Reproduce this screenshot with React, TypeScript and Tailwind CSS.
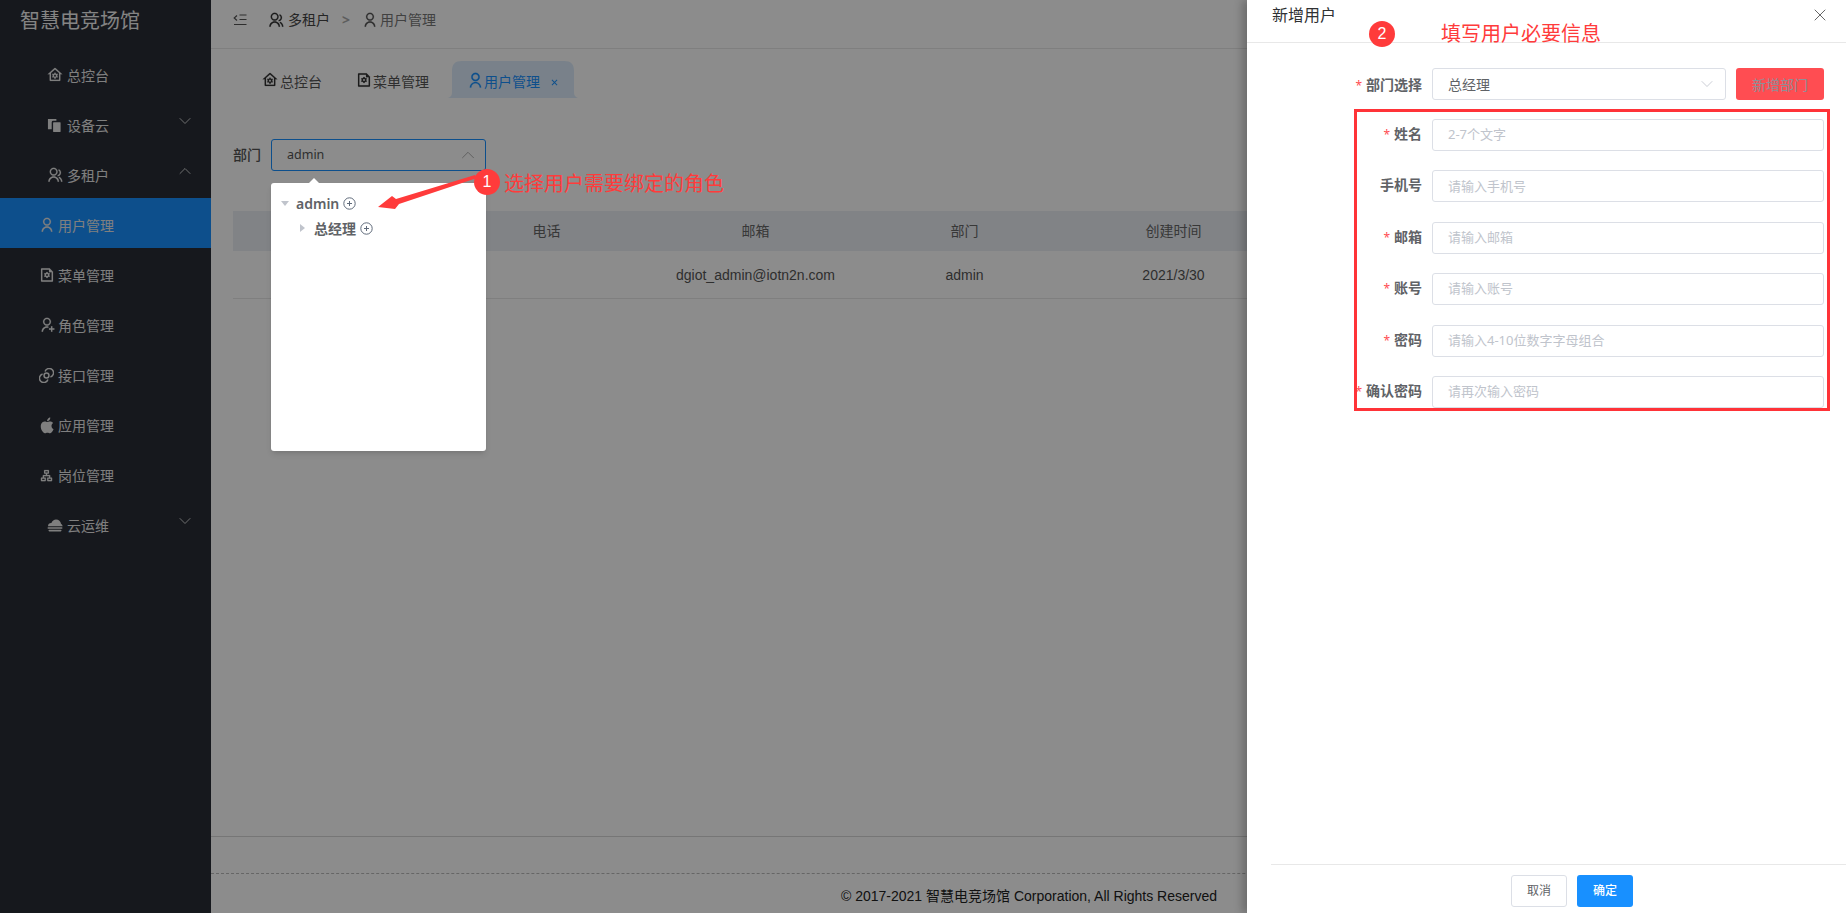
import React from "react";
import {
  RiHomeGearLine,
  RiFileSettingsLine,
  RiUserLine,
  RiGroupLine,
  RiUserAddLine,
  RiAppleFill,
  RiOrganizationChart,
  RiCloseLine,
} from "react-icons/ri";
import { ChevronDown, ChevronUp, X } from "lucide-react";

const CJK = "font-['Noto_Sans','Noto_Sans_CJK_SC',sans-serif]";
const ARIAL = "font-['Liberation_Sans','Noto_Sans_CJK_SC',sans-serif]";

const Devices = ({ size = 15 }: { size?: number }) => (
  <svg width={size} height={size} viewBox="0 0 16 16" fill="currentColor">
    <path d="M1 1h9v2H6.5A1.5 1.5 0 0 0 5 4.5V12H1z" />
    <rect x="6.5" y="4.5" width="8" height="10.5" rx="0.5" />
  </svg>
);
const LinkRings = ({ size = 15 }: { size?: number }) => (
  <svg width={size} height={size} viewBox="0 0 16 16" fill="none" stroke="currentColor" strokeWidth="1.6">
    <path d="M6.5 3.8a4.6 4.6 0 1 1 5.7 5.7" />
    <path d="M9.5 12.2a4.6 4.6 0 1 1-5.7-5.7" />
    <circle cx="8" cy="8" r="2.6" />
  </svg>
);
const CloudBars = ({ size = 16 }: { size?: number }) => (
  <svg width={size} height={size} viewBox="0 0 16 14" fill="currentColor">
    <path d="M1 8.2C1 6 2.8 4.8 4.4 5 5.2 2.8 7 1.6 9 1.6c2.8 0 4.6 2 5 4.2.8.4 1.4 1.2 1.6 2.4z" />
    <rect x="0.5" y="9.2" width="15" height="1.6" rx="0.8" />
    <rect x="1.5" y="11.8" width="13" height="1.6" rx="0.8" />
  </svg>
);
const Collapse = () => (
  <svg width="14" height="12" viewBox="0 0 14 12" fill="none" stroke="currentColor" strokeWidth="1.2">
    <path d="M4 1.5 1.2 4 4 6.5" />
    <path d="M6.5 1h7M6.5 5.5h7M1 10.5h12.5" />
  </svg>
);
const PlusCircle = () => (
  <svg width="13" height="13" viewBox="0 0 13 13" fill="none" stroke="#5f6a7a" strokeWidth="1">
    <circle cx="6.5" cy="6.5" r="5.7" />
    <path d="M6.5 4v5M4 6.5h5" />
  </svg>
);

const thick = { stroke: "currentColor", strokeWidth: 0.25 };

type Item = { label: string; icon: React.ReactNode; child?: boolean; active?: boolean; chev?: "up" | "down" };
const items: Item[] = [
  { label: "总控台", icon: <RiHomeGearLine size={16} {...thick} /> },
  { label: "设备云", icon: <Devices />, chev: "down" },
  { label: "多租户", icon: <RiGroupLine size={16} {...thick} />, chev: "up" },
  { label: "用户管理", icon: <RiUserLine size={16} {...thick} />, child: true, active: true },
  { label: "菜单管理", icon: <RiFileSettingsLine size={16} {...thick} />, child: true },
  { label: "角色管理", icon: <RiUserAddLine size={16} {...thick} />, child: true },
  { label: "接口管理", icon: <LinkRings />, child: true },
  { label: "应用管理", icon: <RiAppleFill size={17} />, child: true },
  { label: "岗位管理", icon: <RiOrganizationChart size={15} {...thick} />, child: true },
  { label: "云运维", icon: <CloudBars />, chev: "down" },
];

function Sidebar() {
  return (
    <aside className="w-[211px] shrink-0 bg-[#282c35] text-[#e8e8e8]">
      <div className="h-[48px] pl-[20px] pt-[5px] text-[20px] leading-[32px] text-[#f0f0f0]">智慧电竞场馆</div>
      {items.map((it) => (
        <div
          key={it.label}
          className={
            "flex h-[50px] items-center pt-[4px] text-[14px] " +
            (it.child ? "pl-[39px] " : "pl-[47px] ") +
            (it.active ? "bg-[#1890ff]" : "")
          }
        >
          <span className="flex w-[19px] shrink-0 items-center">{it.icon}</span>
          <span className={it.child ? "" : "ml-[1px]"}>{it.label}</span>
          {it.chev === "down" && <ChevronDown size={20} strokeWidth={1} className="ml-auto mr-[16px] -mt-[8px]" />}
          {it.chev === "up" && <ChevronUp size={20} strokeWidth={1} className="ml-auto mr-[16px] -mt-[8px]" />}
        </div>
      ))}
    </aside>
  );
}

function Header() {
  return (
    <header className="flex h-[49px] items-start border-b border-[#e8e8e8] pl-[22px] pt-[10px] text-[14px] leading-[20px] text-[#555]">
      <span className="mt-[4px]"><Collapse /></span>
      <RiGroupLine size={16} {...thick} className="ml-[21px] mt-[2px] text-[#333]" />
      <span className="ml-[4px] text-[#444]">多租户</span>
      <span className="ml-[12px] font-bold text-[#aaa]">&gt;</span>
      <RiUserLine size={16} className="ml-[12px] mt-[2px] text-[#555]" {...thick} />
      <span className="ml-[2px] text-[#777]">用户管理</span>
    </header>
  );
}

function Tabs() {
  return (
    <div className="flex h-[49px] items-end pl-[51px] text-[14px] text-[#555]">
      <div className="flex h-[37px] w-[94px] items-center pt-[3px]">
        <RiHomeGearLine size={16} {...thick} className="-mt-[2px] text-[#333]" />
        <span className="ml-[2px]">总控台</span>
      </div>
      <div className="flex h-[37px] w-[90px] items-center pt-[3px]">
        <RiFileSettingsLine size={16} {...thick} className="-mt-[2px] text-[#333]" />
        <span className="ml-[1px]">菜单管理</span>
      </div>
      <div className="relative flex h-[37px] w-[134px] items-center pl-[21px] pt-[3px] text-[#1890ff]">
        <svg className="absolute inset-0" width="134" height="37" viewBox="0 0 134 37" fill="#dcecfb">
          <path d="M0 37c4 0 6-2 6-6V10C6 3 9 0 16 0h102c7 0 10 3 10 10v21c0 4 2 6 6 6z" />
        </svg>
        <RiUserLine size={17} {...thick} className="relative -mt-[2px]" />
        <span className="relative">用户管理</span>
        <RiCloseLine size={11} className="relative ml-[9px] mt-[2px]" />
      </div>
    </div>
  );
}

function Table() {
  const heads = ["", "电话", "邮箱", "部门", "创建时间", ""];
  const cells = ["", "", "dgiot_admin@iotn2n.com", "admin", "2021/3/30", ""];
  return (
    <div className={ARIAL + " ml-[22px] text-[14px] text-[#555]"}>
      <div className="grid h-[40px] grid-cols-[repeat(6,209px)] items-center bg-[#ebeff5] text-center text-[#666]">
        {heads.map((h, i) => (
          <div key={i}>{h}</div>
        ))}
      </div>
      <div className="grid h-[48px] grid-cols-[repeat(6,209px)] items-center border-b border-[#e8e8e8] pt-[2px] text-center">
        {cells.map((c, i) => (
          <div key={i}>{c}</div>
        ))}
      </div>
    </div>
  );
}

function Main() {
  return (
    <main className="flex min-w-0 flex-1 flex-col bg-[#ffffff]">
      <Header />
      <Tabs />
      <div className="flex h-[113px] items-start pl-[22px] pt-[41px]">
        <span className="w-[38px] text-[14px] font-medium leading-[32px] text-[#555]">部门</span>
        <div className="flex h-[32px] w-[215px] items-center justify-between rounded-[3px] border border-[#1890ff] pl-[15px] pr-[6px] text-[12.5px] text-[#555]">
          <span>admin</span>
          <ChevronUp size={22} strokeWidth={1} className="text-[#aaa]" />
        </div>
      </div>
      <Table />
      <div className="flex-1" />
      <div className="h-[37px] border-t border-[#d8d8d8]" />
      <div className={ARIAL + " flex h-[40px] items-center border-t border-dashed border-[#bbb] pl-[630px] pt-[5px] text-[14px] text-[#222]"}>
        © 2017-2021 智慧电竞场馆 Corporation, All Rights Reserved
      </div>
    </main>
  );
}

function TreeDropdown() {
  return (
    <div className="absolute left-[271px] top-[183px] h-[268px] w-[215px] rounded-[3px] bg-white text-[14px] font-semibold text-[#606266] shadow-md">
      <span className="absolute -top-[5px] left-[37px] h-0 w-0 border-x-[6px] border-b-[6px] border-x-transparent border-b-white" />
      <div className="mt-[7px] flex h-[26px] items-center pl-[10px]">
        <span className="h-0 w-0 border-x-[4px] border-t-[5px] border-x-transparent border-t-[#c0c4cc]" />
        <span className="ml-[7px]">admin</span>
        <span className="ml-[4px] flex"><PlusCircle /></span>
      </div>
      <div className="-mt-[1px] flex h-[26px] items-center pl-[29px]">
        <span className="h-0 w-0 border-y-[4px] border-l-[5px] border-y-transparent border-l-[#c0c4cc]" />
        <span className="ml-[9px]">总经理</span>
        <span className="ml-[4px] flex"><PlusCircle /></span>
      </div>
    </div>
  );
}

function Star() {
  return <span className="mr-[4px] text-[12px] font-normal text-[#ff4d52]">*</span>;
}

function Field({ label, ph, required = true }: { label: string; ph: string; required?: boolean }) {
  return (
    <div className="flex h-[32px] items-center">
      <label className="-mt-[3px] w-[150px] shrink-0 pr-[10px] text-right text-[14px] font-semibold text-[#606266]">
        {required && <Star />}
        {label}
      </label>
      <div className="flex h-[32px] w-[392px] items-center rounded-[3px] border border-[#dcdfe6] pl-[15px] text-[13px] text-[#c0c4cc]">
        {ph}
      </div>
    </div>
  );
}

function Drawer() {
  return (
    <div className="absolute bottom-0 right-0 top-0 flex w-[599px] flex-col bg-white shadow-[-5px_0_8px_rgba(0,0,0,0.22)]">
      <div className="flex h-[43px] justify-between border-b border-[#e8e8e8] pl-[25px] pr-[16px] pt-[3px] text-[16px] leading-[24px] text-[#303133]">
        <span>新增用户</span>
        <X size={20} strokeWidth={1.2} className="mt-[2px] text-[#666]" />
      </div>
      <div className="mt-[25px] flex h-[32px] items-center">
        <label className="ml-[35px] w-[150px] shrink-0 pr-[10px] text-right text-[14px] font-semibold text-[#606266]">
          <Star />部门选择
        </label>
        <div className="flex h-[32px] w-[294px] items-center justify-between rounded-[3px] border border-[#dcdfe6] pl-[15px] pr-[8px] text-[14px] text-[#606266]">
          总经理
          <ChevronDown size={20} strokeWidth={1} className="text-[#c0c4cc]" />
        </div>
        <div className="ml-[10px] flex h-[32px] w-[88px] items-center justify-center rounded-[3px] bg-[#ff4d52] text-[14px] text-[#8f8f98]">
          新增部门
        </div>
      </div>
      <div className="ml-[35px] mt-[19px] flex flex-col gap-[19.4px]">
        <Field label="姓名" ph="2-7个文字" />
        <Field label="手机号" ph="请输入手机号" required={false} />
        <Field label="邮箱" ph="请输入邮箱" />
        <Field label="账号" ph="请输入账号" />
        <Field label="密码" ph="请输入4-10位数字字母组合" />
        <Field label="确认密码" ph="请再次输入密码" />
      </div>
      <div className="flex-1" />
      <div className="ml-[24px] flex h-[49px] gap-[10px] border-t border-[#e8e8e8] pl-[240px] pt-[10px] text-[12px]">
        <div className="flex h-[32px] w-[56px] items-center justify-center rounded-[3px] border border-[#dcdfe6] text-[#606266]">取消</div>
        <div className="flex h-[32px] w-[56px] items-center justify-center rounded-[3px] bg-[#1890ff] font-medium text-white">确定</div>
      </div>
    </div>
  );
}

function Annotations() {
  return (
    <>
      <svg className="absolute left-[370px] top-[170px]" width="110" height="45" viewBox="0 0 110 45" fill="#ff3b3b">
        <path d="M8 37 22 26 26 29 105 5 107 8 29 34 25 39z" />
      </svg>
      <div className="absolute left-[474px] top-[169px] flex h-[26px] w-[26px] items-center justify-center rounded-full bg-[#ff3b3b] font-['Liberation_Sans'] text-[16px] text-white">1</div>
      <div className="absolute left-[504px] top-[169px] text-[20px] leading-[30px] text-[#ff3b3b]">选择用户需要绑定的角色</div>
      <div className="absolute left-[1369px] top-[21px] flex h-[26px] w-[26px] items-center justify-center rounded-full bg-[#ff3b3b] font-['Liberation_Sans'] text-[16px] text-white">2</div>
      <div className="absolute left-[1441px] top-[19px] text-[20px] leading-[30px] text-[#ff3b3b]">填写用户必要信息</div>
      <div className="absolute left-[1354px] top-[109px] h-[302px] w-[476px] border-[3px] border-[#ff3338]" />
    </>
  );
}

export default function App() {
  return (
    <div className={CJK + " relative flex h-[913px] w-[1846px] overflow-hidden"}>
      <Sidebar />
      <Main />
      <div className="absolute inset-0 bg-black/45" />
      <TreeDropdown />
      <Drawer />
      <Annotations />
    </div>
  );
}
